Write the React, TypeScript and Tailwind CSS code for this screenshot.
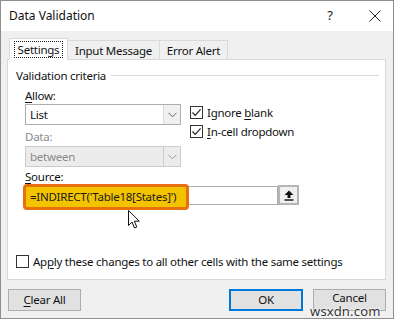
import React from "react";

const font = { fontFamily: '"Noto Sans", "Segoe UI", sans-serif' };

function Check({ checked }: { checked: boolean }) {
  return (
    <div className="w-[13px] h-[13px] border border-[#333333] bg-white flex items-center justify-center shrink-0">
      {checked && (
        <svg width="11" height="11" viewBox="0 0 11 11">
          <path d="M1.5 5.5 L4.2 8.3 L9.6 2.4" fill="none" stroke="#222" strokeWidth="1.2" />
        </svg>
      )}
    </div>
  );
}

function Chevron({ color }: { color: string }) {
  return (
    <svg width="9" height="6" viewBox="0 0 9 6">
      <path d="M0.5 0.8 L4.5 4.8 L8.5 0.8" fill="none" stroke={color} strokeWidth="1" />
    </svg>
  );
}

function Select({ value, disabled }: { value: string; disabled?: boolean }) {
  return (
    <div
      className={
        "w-[156px] h-[21px] flex items-stretch border " +
        (disabled ? "border-[#cccccc] bg-[#ececec]" : "border-[#adadad] bg-white")
      }
    >
      <div
        className={
          "flex-1 flex items-center pl-[4px] " + (disabled ? "text-[#8a8a8a]" : "text-[#111]")
        }
      >
        {value}
      </div>
      <div
        className={
          "w-[17px] flex items-center justify-center border-l " +
          (disabled ? "border-[#cccccc]" : "border-[#dadada] bg-[#f0f0f0]")
        }
      >
        <Chevron color={disabled ? "#9a9a9a" : "#606060"} />
      </div>
    </div>
  );
}

function Btn({ children, primary }: { children: React.ReactNode; primary?: boolean }) {
  return (
    <div
      className={
        "h-[22px] flex items-center justify-center text-[#111] bg-[#e1e1e1] " +
        (primary ? "w-[74px] border-2 border-[#0078d7]" : "w-[73px] border border-[#adadad]")
      }
    >
      {children}
    </div>
  );
}

export default function App() {
  return (
    <div
      className="relative w-[394px] h-[319px] border border-[#8f8f8f] bg-[#f0f0f0] flex flex-col text-[#111] text-[11.5px] tracking-[-0.25px] overflow-hidden"
      style={font}
    >
      {/* title bar */}
      <div className="h-[30px] bg-white flex items-center pl-[8px] pr-[12px] text-[12px] tracking-normal">
        <span className="flex-1">Data Validation</span>
        <span className="mr-[36px] text-[13px]">?</span>
        <svg width="12" height="12" viewBox="0 0 12 12">
          <path d="M0.5 0.5 L11.5 11.5 M11.5 0.5 L0.5 11.5" stroke="#222" strokeWidth="1" />
        </svg>
      </div>

      <div className="flex flex-col pl-[6px] pr-[7px] pt-[7px]">
        {/* tabs */}
        <div className="flex items-end h-[22px] pl-[2px] relative z-10">
          <div className="w-[59px] h-[22px] bg-white border border-b-0 border-[#d9d9d9] flex items-center justify-center">
            <span className="px-[3px] leading-[15px] border border-dotted border-[#222]">Settings</span>
          </div>
          <div className="w-[92px] h-[20px] border border-l-0 border-b-0 border-[#d9d9d9] flex items-center justify-center">
            Input Message
          </div>
          <div className="w-[68px] h-[20px] border border-l-0 border-b-0 border-[#d9d9d9] flex items-center justify-center">
            Error Alert
          </div>
        </div>

        {/* panel */}
        <div className="relative -mt-px h-[221px] bg-white border border-[#d9d9d9] pl-[8px] pr-[6px]">
          <div className="flex items-center mt-[7px] h-[17px]">
            <span>Validation criteria</span>
            <div className="flex-1 h-px bg-[#dcdcdc] ml-[5px]" />
          </div>

          <div className="flex mt-[3px] pl-[9px]">
            <div className="flex flex-col w-[165px]">
              <div className="h-[17px] leading-[17px]">
                <span className="underline underline-offset-2">A</span>llow:
              </div>
              <Select value="List" />
              <div className="h-[17px] leading-[17px] mt-[3px] text-[#8a8a8a]">Data:</div>
              <div className="mt-[1px]">
                <Select value="between" disabled />
              </div>
            </div>
            <div className="flex flex-col gap-[6px] pt-[19px]">
              <div className="flex items-center gap-[4px] h-[13px]">
                <Check checked />
                <span>
                  Ignore <span className="underline underline-offset-2">b</span>lank
                </span>
              </div>
              <div className="flex items-center gap-[4px] h-[13px]">
                <Check checked />
                <span>
                  <span className="underline underline-offset-2">I</span>n-cell dropdown
                </span>
              </div>
            </div>
          </div>

          <div className="pl-[9px] mt-[1px] h-[17px] leading-[17px]">
            <span className="underline underline-offset-2">S</span>ource:
          </div>
          <div className="pl-[9px] mt-[1px] flex">
            <div className="relative w-[253px] h-[19px] border border-[#adadad] bg-white">
              <div className="absolute left-[-3px] top-[-3px] w-[166px] h-[26px] rounded-[4px] border-[3px] border-[#e8700f] bg-[#f3c300] flex items-center pl-[4px] text-[#1a1a1a]">
                =INDIRECT('Table18[States]')
              </div>
            </div>
            <div className="w-[21px] h-[20px] -mt-px bg-[#f0f0f0] border-2 border-[#b5b5b5] flex items-center justify-center">
              <svg width="10" height="11" viewBox="0 0 10 11">
                <path d="M5 0.5 L9.5 5 H6.5 V8 H3.5 V5 H0.5 Z" fill="#111" />
                <rect x="0.5" y="9.3" width="9" height="1.4" fill="#111" />
              </svg>
            </div>
          </div>

          <div className="flex items-center gap-[4px] mt-[50px] h-[13px]">
            <Check checked={false} />
            <span>
              Ap<span className="underline underline-offset-2">p</span>ly these changes to all other cells with the same settings
            </span>
          </div>

          {/* mouse cursor */}
          <svg
            className="absolute left-[120px] top-[150px]"
            width="13"
            height="19"
            viewBox="0 0 13 19"
          >
            <path
              d="M0.5 0.5 V15.5 L4 12 L6.5 18 L8.8 17 L6.3 11.2 H11.3 Z"
              fill="#fff"
              stroke="#111"
              strokeWidth="1"
              strokeLinejoin="round"
            />
          </svg>
        </div>

        {/* buttons */}
        <div className="flex items-center mt-[9px] pl-[1px]">
          <Btn>
            <span>
              <span className="underline underline-offset-2">C</span>lear All
            </span>
          </Btn>
          <div className="flex-1" />
          <Btn primary>OK</Btn>
          <div className="w-[10px]" />
          <Btn>
            <span className="-mt-[4px]">Cancel</span>
          </Btn>
        </div>
      </div>

      <div
        className="absolute left-[309px] top-[301px] text-[13px] text-[#333] tracking-[0.2px]"
        style={{ textShadow: "0 0 2px #fff, 0 0 2px #fff, 0 0 1px #fff" }}
      >
        wsxdn.com
      </div>
    </div>
  );
}
